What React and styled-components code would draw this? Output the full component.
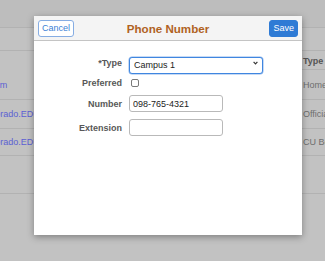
import React from "react";
import styled, { createGlobalStyle } from "styled-components";

const Global = createGlobalStyle`
  html, body { margin: 0; padding: 0; }
  body {
    background: #c2c2c2;
    font-family: "Liberation Sans", Arial, sans-serif;
    width: 325px;
    height: 261px;
    overflow: hidden;
  }
`;

const Page = styled.div`
  position: relative;
  width: 325px;
  height: 261px;
  overflow: hidden;
`;

const TopBar = styled.div`
  height: 27px;
  background: #bdbdbd;
  border-bottom: 1px solid #b2b2b2;
`;

const SubBar = styled.div`
  height: 22px;
  border-bottom: 1px solid #b2b2b2;
`;

const Table = styled.div`
  display: grid;
  grid-template-columns: 200px 163px 1fr;
  margin-left: -64px;
  font-size: 9px;
`;

const Cell = styled.div`
  height: ${(p) => p.$h}px;
  box-sizing: border-box;
  display: flex;
  align-items: ${(p) => (p.$head ? "flex-end" : "center")};
  padding-left: 4px;
  padding-bottom: ${(p) => (p.$head ? 3 : 0)}px;
  white-space: nowrap;
  overflow: hidden;
  border-bottom: 1px solid ${(p) => (p.$noLine ? "transparent" : "#b2b2b2")};
  color: ${(p) => (p.$link ? "#5b5fd3" : p.$head ? "#555" : "#6e6e6e")};
  font-weight: ${(p) => (p.$head ? "bold" : "normal")};
`;

const Dialog = styled.div`
  position: absolute;
  left: 34px;
  top: 16px;
  width: 268px;
  height: 219px;
  background: #fff;
  box-shadow: 0 2px 7px rgba(0, 0, 0, 0.35);
  display: flex;
  flex-direction: column;
`;

const Header = styled.div`
  height: 24px;
  background: #f4f4f4;
  border-bottom: 1px solid #c4c4c4;
  display: grid;
  grid-template-columns: 1fr auto 1fr;
  align-items: center;
  padding: 0 4px;
`;

const Button = styled.button`
  font-family: "Liberation Sans", Arial, sans-serif;
  font-size: 9px;
  height: 17px;
  padding: 0 3px;
  border-radius: 3px;
  cursor: pointer;
  justify-self: ${(p) => (p.$primary ? "end" : "start")};
  background: ${(p) => (p.$primary ? "#2f7bd5" : "#fff")};
  color: ${(p) => (p.$primary ? "#fff" : "#3d7fd6")};
  border: 1px solid ${(p) => (p.$primary ? "#2f7bd5" : "#86ade3")};
  min-width: ${(p) => (p.$primary ? 26 : 34)}px;
`;

const Title = styled.div`
  font-size: 11.6px;
  font-weight: bold;
  color: #b0621f;
`;

const Form = styled.div`
  display: grid;
  grid-template-columns: 88px 1fr;
  column-gap: 7px;
  row-gap: 7px;
  padding-top: 13px;
  align-items: center;
`;

const Label = styled.label`
  text-align: right;
  font-size: 9px;
  font-weight: bold;
  color: #585858;
`;

const SelectWrap = styled.div`
  position: relative;
  width: 134px;
  height: 17px;
`;

const Select = styled.select`
  appearance: none;
  width: 134px;
  height: 17px;
  box-sizing: border-box;
  border: 1px solid #3f86e0;
  border-radius: 3px;
  background: #fff;
  font-family: "Liberation Sans", Arial, sans-serif;
  font-size: 9px;
  color: #222;
  padding: 0 0 0 4px;
  outline: none;
  box-shadow: 0 0 0 0.5px #8db6ec;
`;

const Chevron = styled.svg`
  position: absolute;
  right: 5px;
  top: 7px;
  pointer-events: none;
`;

const Checkbox = styled.input`
  appearance: none;
  margin: 0 0 0 2px;
  width: 8px;
  height: 8px;
  border: 1px solid #7a7a7a;
  border-radius: 2px;
  background: #fff;
  box-sizing: border-box;
`;

const Input = styled.input`
  width: 94px;
  height: 17px;
  box-sizing: border-box;
  border: 1px solid #b9b9b9;
  border-radius: 3px;
  font-family: "Liberation Sans", Arial, sans-serif;
  font-size: 9px;
  color: #222;
  padding: 0 0 0 3px;
  outline: none;
`;

const Field = styled.div`
  display: flex;
  align-items: center;
  height: ${(p) => p.$h || 17}px;
`;

const rows = [
  { h: 19, left: "", right: "Type", head: true, noLeftLine: true },
  { h: 30, left: "jdoe@gmail.com", right: "Home" },
  { h: 29, left: "jane.doe@colorado.EDU", right: "Official" },
  { h: 27, left: "john.doe@colorado.EDU", right: "CU Boulder" },
  { h: 38, left: "", right: "" },
];

export default function App() {
  return (
    <Page>
      <Global />
      <TopBar />
      <SubBar />
      <Table>
        {rows.map((r, i) => (
          <React.Fragment key={i}>
            <Cell $h={r.h} $link $noLine={r.noLeftLine}>{r.left}</Cell>
            <Cell $h={r.h} $noLine={r.noLeftLine} />
            <Cell $h={r.h} $head={r.head}>{r.right}</Cell>
          </React.Fragment>
        ))}
      </Table>

      <Dialog>
        <Header>
          <Button>Cancel</Button>
          <Title>Phone Number</Title>
          <Button $primary>Save</Button>
        </Header>
        <Form>
          <Label>*Type</Label>
          <SelectWrap>
            <Select defaultValue="Campus 1">
              <option>Campus 1</option>
              <option>Home</option>
              <option>Official</option>
            </Select>
            <Chevron width="5" height="4" viewBox="0 0 5 4">
              <path d="M0.6 0.8 L2.5 2.8 L4.4 0.8" fill="none" stroke="#333" strokeWidth="1.2" />
            </Chevron>
          </SelectWrap>

          <Label>Preferred</Label>
          <Field $h={10}>
            <Checkbox type="checkbox" />
          </Field>

          <Label>Number</Label>
          <Field>
            <Input defaultValue="098-765-4321" />
          </Field>

          <Label>Extension</Label>
          <Field>
            <Input defaultValue="" />
          </Field>
        </Form>
      </Dialog>
    </Page>
  );
}
